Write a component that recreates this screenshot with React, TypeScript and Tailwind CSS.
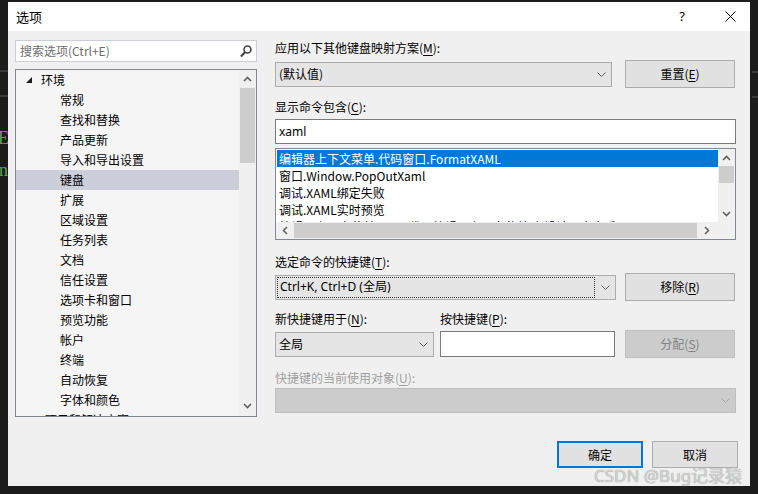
import React from "react";

const CJK = "font-['Microsoft_YaHei','Noto_Sans_CJK_SC',sans-serif]";

function Chevron({ c = "#606060" }: { c?: string }) {
  return (
    <svg width="9" height="5" viewBox="0 0 9 5">
      <polyline points="0.5,0.5 4.5,4.5 8.5,0.5" fill="none" stroke={c} strokeWidth="1" />
    </svg>
  );
}

function Arrow({ dir }: { dir: "up" | "down" | "left" | "right" }) {
  const pts: Record<string, string> = {
    up: "1,5 4.5,1.5 8,5",
    down: "1,1 4.5,4.5 8,1",
    left: "5,1 1.5,4.5 5,8",
    right: "1,1 4.5,4.5 1,8",
  };
  const vert = dir === "up" || dir === "down";
  return (
    <svg width={vert ? 9 : 6} height={vert ? 6 : 9} viewBox={vert ? "0 0 9 6" : "0 0 6 9"}>
      <polyline points={pts[dir]} fill="none" stroke="#606060" strokeWidth="1.6" />
    </svg>
  );
}

function U({ children }: { children: React.ReactNode }) {
  return <span className="underline underline-offset-2">{children}</span>;
}

const treeItems = [
  "常规",
  "查找和替换",
  "产品更新",
  "导入和导出设置",
  "键盘",
  "扩展",
  "区域设置",
  "任务列表",
  "文档",
  "信任设置",
  "选项卡和窗口",
  "预览功能",
  "帐户",
  "终端",
  "自动恢复",
  "字体和颜色",
];

const listItems = [
  "编辑器上下文菜单.代码窗口.FormatXAML",
  "窗口.Window.PopOutXaml",
  "调试.XAML绑定失败",
  "调试.XAML实时预览",
  "编辑器上下文菜单.XAML代码编辑器上下文菜单.在设计器中查看",
];

function Button({
  children,
  w,
  disabled,
  primary,
}: {
  children: React.ReactNode;
  w: string;
  disabled?: boolean;
  primary?: boolean;
}) {
  const base = "h-[28px] flex items-center justify-center text-[12px] ";
  if (disabled)
    return <div className={base + w + " bg-[#cccccc] border border-[#bfbfbf] text-[#838383]"}>{children}</div>;
  if (primary)
    return <div className={base + w + " bg-[#e1e1e1] border-2 border-[#0078d7] text-black"}>{children}</div>;
  return <div className={base + w + " bg-[#e1e1e1] border border-[#adadad] text-black"}>{children}</div>;
}

export default function App() {
  return (
    <div className={"w-[758px] h-[494px] bg-[#1c1c1c] flex overflow-hidden " + CJK}>
      {/* left strip */}
      <div className="w-[8px] h-full flex flex-col overflow-hidden">
        <div className="mt-[70px] h-[2px] bg-[#3a3a3a]" />
        <div className="mt-[23px] h-[2px] bg-[#3a3a3a]" />
        <div className="mt-[32px] h-[18px] -ml-[2px] text-[18px] leading-[18px] text-[#57a64a] font-['Liberation_Serif',serif]">
          E
        </div>
        <div className="mt-[14px] h-[18px] -ml-[1px] text-[18px] leading-[18px] text-[#57a64a] font-['Liberation_Serif',serif]">
          n
        </div>
      </div>

      {/* dialog */}
      <div className="mt-[2px] w-[742px] h-[484px] bg-[#f0f0f0] flex flex-col relative">
        {/* title bar */}
        <div className="h-[29px] bg-white flex items-center pl-[8px] text-[13px] text-black">
          <span>选项</span>
          <span className="ml-auto mr-[40px] text-[13px] font-['Noto_Sans',sans-serif]">?</span>
          <svg width="11" height="11" viewBox="0 0 11 11" className="mr-[14px]">
            <path d="M0.5 0.5 L10.5 10.5 M10.5 0.5 L0.5 10.5" stroke="#000" strokeWidth="1" />
          </svg>
        </div>

        {/* body */}
        <div className="flex pl-[7px] pt-[9px]">
          {/* left column */}
          <div className="w-[242px] flex flex-col">
            <div className="h-[22px] bg-white border border-[#cccedb] flex items-center pl-[4px] pr-[4px]">
              <span className="text-[12px] text-[#6d6d6d]">搜索选项(Ctrl+E)</span>
              <svg width="12" height="13" viewBox="0 0 12 13" className="ml-auto">
                <circle cx="7.5" cy="4.5" r="3.5" fill="none" stroke="#444" strokeWidth="1.6" />
                <path d="M5 7.2 L1 11.5" stroke="#444" strokeWidth="2" />
              </svg>
            </div>
            <div className="mt-[7px] h-[348px] border border-[#828790] bg-[#f5f5f5] flex overflow-hidden">
              <div className="flex-1 overflow-hidden text-[12px] text-black">
                <div className="h-[20px] flex items-center pl-[10px]">
                  <svg width="6" height="6" viewBox="0 0 6 6">
                    <polygon points="6,0 6,6 0,6" fill="#1e1e1e" />
                  </svg>
                  <span className="ml-[9px]">环境</span>
                </div>
                {treeItems.map((t) => (
                  <div
                    key={t}
                    className={
                      "h-[20px] flex items-center pl-[44px] " + (t === "键盘" ? "bg-[#cccedb]" : "")
                    }
                  >
                    {t}
                  </div>
                ))}
                <div className="h-[20px] flex items-center pl-[29px] whitespace-nowrap">项目和解决方案</div>
              </div>
              <div className="w-[17px] bg-[#f0f0f0] flex flex-col">
                <div className="h-[18px] flex items-center justify-center">
                  <Arrow dir="up" />
                </div>
                <div className="h-[75px] mx-[1px] bg-[#cdcdcd]" />
                <div className="mt-auto h-[20px] flex items-center justify-center">
                  <Arrow dir="down" />
                </div>
              </div>
            </div>
          </div>

          {/* right column */}
          <div className="ml-[18px] w-[461px] flex flex-col text-[12px] text-black">
            <div className="h-[16px] leading-[16px]">
              应用以下其他键盘映射方案(<U>M</U>):
            </div>
            <div className="mt-[4px] h-[28px] flex items-center">
              <div className="w-[337px] h-[25px] bg-[#e5e5e5] border border-[#acacac] flex items-center pl-[3px] pr-[5px]">
                <span>(默认值)</span>
                <span className="ml-auto">
                  <Chevron />
                </span>
              </div>
              <div className="ml-[13px]">
                <Button w="w-[110px]">
                  重置(<U>E</U>)
                </Button>
              </div>
            </div>

            <div className="mt-[11px] h-[16px] leading-[16px]">
              显示命令包含(<U>C</U>):
            </div>
            <div className="mt-[4px] h-[25px] bg-white border border-[#7a7a7a] flex items-center pl-[3px] font-['Noto_Sans',sans-serif] text-[12px]">
              xaml
            </div>

            <div className="mt-[4px] h-[92px] border border-[#828790] bg-white flex flex-col overflow-hidden">
              <div className="flex h-[73px]">
                <div className="flex-1 overflow-hidden pt-[1px] pl-[1px]">
                  {listItems.map((t, i) => (
                    <div
                      key={t}
                      className={
                        "h-[17px] leading-[17px] pl-[2px] whitespace-nowrap " +
                        (i === 0 ? "bg-[#0078d7] text-white" : "text-black")
                      }
                    >
                      {t}
                    </div>
                  ))}
                </div>
                <div className="w-[17px] bg-[#f0f0f0] flex flex-col">
                  <div className="h-[17px] flex items-center justify-center">
                    <Arrow dir="up" />
                  </div>
                  <div className="h-[17px] mx-[1px] bg-[#cdcdcd]" />
                  <div className="mt-auto h-[17px] flex items-center justify-center">
                    <Arrow dir="down" />
                  </div>
                </div>
              </div>
              <div className="h-[17px] bg-[#f0f0f0] flex">
                <div className="w-[18px] flex items-center justify-center">
                  <Arrow dir="left" />
                </div>
                <div className="w-[403px] my-[1px] bg-[#cdcdcd]" />
                <div className="w-[20px] flex items-center justify-center">
                  <Arrow dir="right" />
                </div>
                <div className="flex-1" />
              </div>
            </div>

            <div className="mt-[14px] h-[16px] leading-[16px]">
              选定命令的快捷键(<U>T</U>):
            </div>
            <div className="mt-[3px] h-[28px] flex items-center">
              <div className="w-[341px] h-[25px] bg-[#e5e5e5] border border-[#acacac] flex items-center p-[1px] pr-[5px]">
                <div className="w-[318px] h-full border border-dotted border-[#333] flex items-center pl-[2px] font-['Noto_Sans','Noto_Sans_CJK_SC',sans-serif]">
                  Ctrl+K, Ctrl+D (全局)
                </div>
                <span className="ml-auto">
                  <Chevron />
                </span>
              </div>
              <div className="ml-[9px]">
                <Button w="w-[110px]">
                  移除(<U>R</U>)
                </Button>
              </div>
            </div>

            <div className="mt-[10px] h-[16px] leading-[16px] flex">
              <span className="w-[165px]">
                新快捷键用于(<U>N</U>):
              </span>
              <span>
                按快捷键(<U>P</U>):
              </span>
            </div>
            <div className="mt-[3px] h-[28px] flex items-center">
              <div className="w-[159px] h-[25px] bg-[#e5e5e5] border border-[#acacac] flex items-center pl-[3px] pr-[5px]">
                <span>全局</span>
                <span className="ml-auto">
                  <Chevron />
                </span>
              </div>
              <div className="ml-[6px] w-[175px] h-[26px] bg-white border border-[#7a7a7a]" />
              <div className="ml-[10px]">
                <Button w="w-[110px]" disabled>
                  分配(<U>S</U>)
                </Button>
              </div>
            </div>

            <div className="mt-[12px] h-[16px] leading-[16px] text-[#a0a0a0]">
              快捷键的当前使用对象(<U>U</U>):
            </div>
            <div className="mt-[2px] h-[25px] bg-[#cccccc] border border-[#bfbfbf] flex items-center pr-[5px]">
              <span className="ml-auto">
                <Chevron c="#a8a8a8" />
              </span>
            </div>

            <div className="mt-[28px] h-[27px] flex justify-end -mr-[2px]">
              <Button w="w-[86px] !h-[27px]" primary>
                确定
              </Button>
              <div className="ml-[9px]">
                <Button w="w-[86px] !h-[27px]">取消</Button>
              </div>
            </div>
          </div>
        </div>

        {/* watermark */}
        <div className="absolute left-[586px] top-[463px] text-[17px] leading-[22px] whitespace-nowrap text-[#d2d2d2] [text-shadow:0_0_1px_#8a8a8a] font-['Noto_Sans','Noto_Sans_CJK_SC',sans-serif]">
          CSDN @Bug记录猿
        </div>
      </div>

      {/* right strip */}
      <div className="w-[8px] h-full flex flex-col">
        <div className="mt-[71px] h-[2px] ml-[2px] bg-[#3a3a3a]" />
        <div className="mt-[23px] h-[2px] ml-[2px] bg-[#3a3a3a]" />
      </div>
    </div>
  );
}
